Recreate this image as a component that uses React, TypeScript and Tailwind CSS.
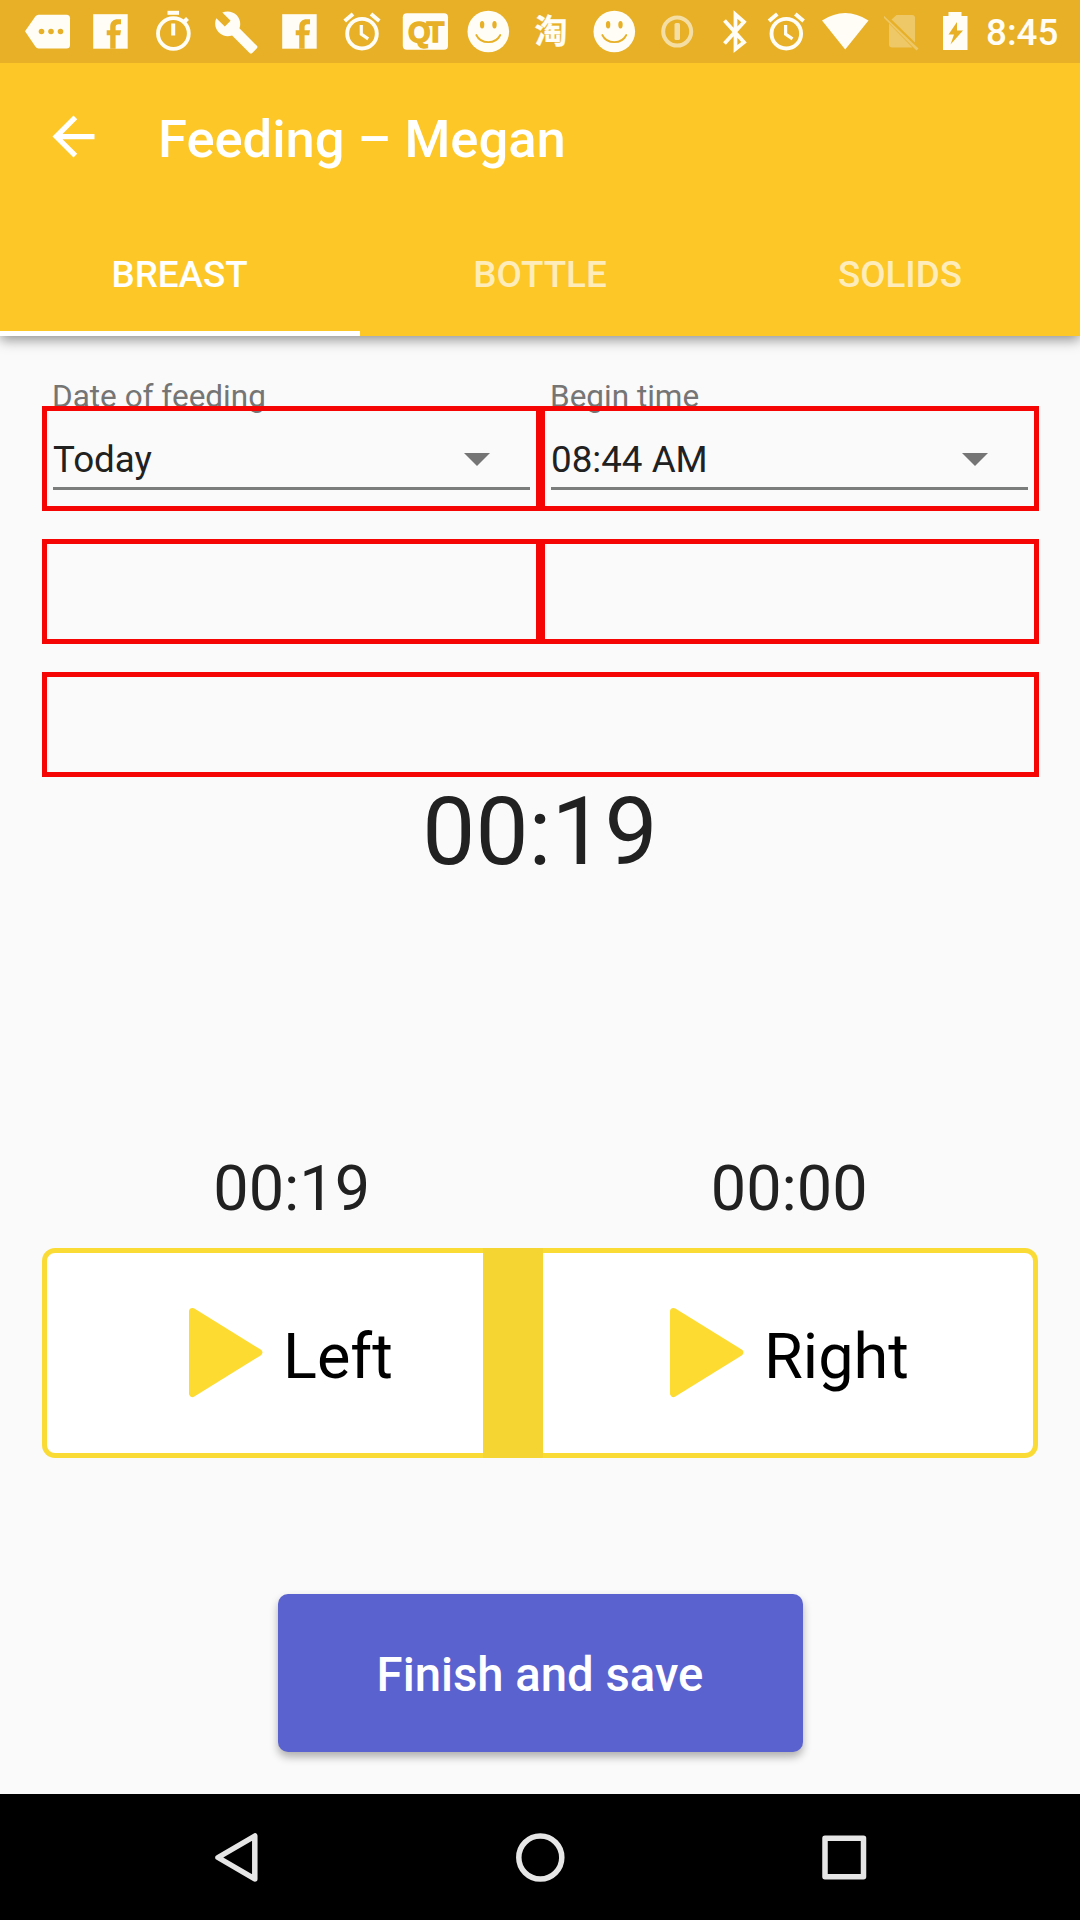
import React from "react";

function Cell({ x, w = 63, children }: { x: number; w?: number; children: React.ReactNode }) {
  return (
    <svg width={w} height={63} viewBox={`${x} 0 ${w} 63`} fill="#fffdf6" className="block shrink-0">
      {children}
    </svg>
  );
}

const BAR = "#e7b027";

function Facebook({ x }: { x: number }) {
  return (
    <Cell x={x}>
      <g transform={`translate(${x} 0)`}>
        <rect x="14.200" y="14.200" width="34.500" height="34.500" />
        <path fill={BAR} d="M31.200 48.700V35.200H27.700V30.200H31.200V27c0-5.300 3.200-7.800 7.600-7.800h3.200v5h-2.400c-2.200 0-3 1-3 3v3h5.400l-.8 5h-4.600v13.500z" />
      </g>
    </Cell>
  );
}

function Alarm({ x, w, cx }: { x: number; w?: number; cx: number }) {
  return (
    <Cell x={x} w={w}>
      <g transform={`translate(${cx} 0)`} fill="none" stroke="#fffdf6">
        <circle cy="33.700" r="14.800" strokeWidth="3.900" />
        <path d="M-.7 25v9.200l6.900 4.600" strokeWidth="3.200" />
        <path d="M-17.300 21l8.300-7M17.300 21L9 14" strokeWidth="4" />
      </g>
    </Cell>
  );
}

function Smile({ x }: { x: number }) {
  return (
    <Cell x={x}>
      <g transform={`translate(${x + 31.300} 31.500)`}>
        <circle r="20.800" />
        <ellipse cx="-6.200" cy="-6.700" rx="2.200" ry="3.700" fill={BAR} />
        <ellipse cx="6.200" cy="-6.700" rx="2.200" ry="3.700" fill={BAR} />
        <path d="M-12 3.500C-7.500 13 7.500 13 12 3.500" fill="none" stroke={BAR} strokeWidth="1.800" strokeLinecap="round" />
      </g>
    </Cell>
  );
}

function StatusBar() {
  return (
    <div className="flex h-[63px] items-center bg-[#e7b027] pl-4">
      <Cell x={16}>
        <path d="M25 31.300L35.500 16.200Q36.700 14.700 38.500 14.700H66.500Q70 14.700 70 18.200V45Q70 48.500 66.500 48.500H38.500Q36.700 48.500 35.500 46.800Z" />
        <g fill={BAR}>
          <circle cx="41.500" cy="31.500" r="2.800" />
          <circle cx="51" cy="31.500" r="2.800" />
          <circle cx="60.500" cy="31.500" r="2.800" />
        </g>
      </Cell>
      <Facebook x={79} />
      <Cell x={142}>
        <rect x="167.500" y="10.800" width="11.500" height="4" />
        <rect x="171.200" y="23.500" width="4" height="12" />
        <circle cx="173.400" cy="33.500" r="15.400" fill="none" stroke="#fffdf6" strokeWidth="3.800" />
        <path d="M183.500 22.500l4-4" stroke="#fffdf6" strokeWidth="4" />
      </Cell>
      <Cell x={205}>
        <path transform="translate(213.300 9.300) scale(1.920)" d="M22.700 19l-9.100-9.100c.9-2.300.4-5-1.500-6.900-2-2-5-2.400-7.400-1.300L9 6 6 9 1.600 4.700C.4 7.100.9 10.100 2.900 12.100c1.900 1.900 4.600 2.400 6.900 1.500l9.100 9.100c.4.400 1 .4 1.400 0l2.300-2.300c.5-.4.500-1.100.1-1.400z" />
      </Cell>
      <Facebook x={268} />
      <Alarm x={331} cx={362} />
      <Cell x={394}>
        <rect x="402.800" y="13.200" width="45.200" height="36.500" rx="4" />
        <text x="408" y="41.500" fill={BAR} stroke={BAR} strokeWidth="1.400" fontFamily="Liberation Sans, sans-serif" fontWeight="700" fontSize="29" letterSpacing="-4">QT</text>
      </Cell>
      <Smile x={457} />
      <Cell x={520}>
        <text x="534.500" y="43" fontSize="33" fontWeight="700" stroke="#fffdf6" strokeWidth="0.300" fontFamily="Noto Sans CJK SC, sans-serif">淘</text>
      </Cell>
      <Smile x={583} />
      <Cell x={646}>
        <g opacity="0.600">
          <circle cx="677.200" cy="31.600" r="14" fill="none" stroke="#fffdf6" strokeWidth="4" />
          <rect x="674.500" y="23" width="5.500" height="17" rx="1.500" />
        </g>
      </Cell>
      <Cell x={709} w={51}>
        <path d="M724.500 20.500L744 42.200L735.500 49V14.500L744 22L724.500 43.500" fill="none" stroke="#fffdf6" strokeWidth="3.800" />
      </Cell>
      <Alarm x={760} w={52} cx={786.300} />
      <Cell x={812} w={66}>
        <path d="M845.200 49.500L822 20.500Q845.200 5.500 868.500 20.500Z" />
      </Cell>
      <Cell x={878} w={46}>
        <g opacity="0.300">
          <path d="M896.500 15H912Q915 15 915 18V42.500L891.500 19.500Z" />
          <path d="M889 23.500V44.500Q889 47.500 892 47.500H912.500Z" />
          <path d="M884 15.700L886 17.700L918.500 48.500L916.500 50.500L884 18Z" />
        </g>
      </Cell>
      <Cell x={924} w={62}>
        <path fillRule="evenodd" d="M943 16H948.500V12H961.500V16H967.500V50H943ZM957 22L948.500 34.500H954L950.500 44.500L963 30.500H957Z" />
      </Cell>
      <span className="mt-[3px] text-[36.750px] leading-[42px] font-medium text-[#fffdf6]">8:45</span>
    </div>
  );
}

function Tab({ label, active = false }: { label: string; active?: boolean }) {
  return (
    <button
      className={
        active
          ? "h-[126px] w-[360px] border-b-[5px] border-white pt-[9px] pr-[1px] text-[36.750px] font-medium text-white"
          : "h-[126px] w-[360px] border-b-[5px] border-transparent pt-[9px] text-[36.750px] font-medium text-white/70"
      }
    >
      {label}
    </button>
  );
}

function Picker({ label, value }: { label: string; value: string }) {
  return (
    <div className="w-[498px]">
      <div className="pt-[1px] pl-[10px] text-[31.500px] leading-[38px] text-[#757575]">{label}</div>
      <div className="relative z-10 -mt-[10px] h-[105px] w-[499px] border-[5px] border-[#f60505] pt-[28px] pl-[6px]">
        <div className="flex h-[51px] w-[477px] items-start justify-between border-b-[3px] border-[#7b7d7c] pr-[40px]">
          <span className="text-[36.750px] leading-[42px] text-[#212121]">{value}</span>
          <svg width="26" height="13" viewBox="0 0 26 13" className="mt-[14px] block">
            <path d="M0 0H26L13 13Z" fill="#757575" />
          </svg>
        </div>
      </div>
    </div>
  );
}

function Play() {
  return (
    <svg width="74" height="90" viewBox="0 0 74 90" className="block">
      <path d="M3.500 3.500L69.800 44.500L3.500 85.500Z" fill="#fddb31" stroke="#fddb31" strokeWidth="7" strokeLinejoin="round" />
    </svg>
  );
}

export default function App() {
  return (
    <div className="flex h-[1920px] w-[1080px] flex-col overflow-hidden bg-[#fafafa] font-['Roboto',sans-serif]">
      <header className="shrink-0 bg-[#fdc727] shadow-[0_4px_12px_rgba(0,0,0,0.420)]">
        <StatusBar />
        <div className="flex h-[147px] items-center pl-[42px]">
          <svg width="63" height="63" viewBox="0 0 24 24" fill="#fff" className="block">
            <path d="M20 11H7.830l5.590-5.590L12 4l-8 8 8 8 1.410-1.410L7.830 13H20v-2z" />
          </svg>
          <h1 className="mt-[6px] ml-[53px] text-[52.500px] font-medium text-white">Feeding – Megan</h1>
        </div>
        <nav className="flex">
          <Tab label="BREAST" active />
          <Tab label="BOTTLE" />
          <Tab label="SOLIDS" />
        </nav>
      </header>

      <main className="flex grow flex-col px-[42px] pt-[41px]">
        <section className="flex">
          <Picker label="Date of feeding" value="Today" />
          <Picker label="Begin time" value="08:44 AM" />
        </section>
        <div className="mt-[28px] flex">
          <div className="h-[105px] w-[499px] shrink-0 border-[5px] border-[#f60505]" />
          <div className="-ml-px h-[105px] w-[499px] shrink-0 border-[5px] border-[#f60505]" />
        </div>
        <div className="mt-[28px] h-[105px] w-[997px] border-[5px] border-[#f60505]" />

        <div className="mt-[5px] h-[100px] text-center text-[94.500px] leading-[100px] text-[#212121]">00:19</div>

        <div className="mt-[271px] flex pl-[1px] text-center text-[63px] leading-[72px] text-[#212121]">
          <div className="w-1/2">00:19</div>
          <div className="w-1/2">00:00</div>
        </div>

        <div className="mt-[23px] flex h-[210px] rounded-[13px] border-[5px] border-[#fadb36] bg-white text-[63px] leading-[72px] text-black">
          <button className="flex w-[436px] items-center pl-[142px]">
            <Play />
            <span className="mt-[7px] ml-[20px]">Left</span>
          </button>
          <div className="-my-[5px] w-[60px] bg-[#f5d531]" />
          <button className="flex grow items-center pl-[127px]">
            <Play />
            <span className="mt-[7px] ml-[20px]">Right</span>
          </button>
        </div>

        <button className="mt-[136px] h-[158px] w-[525px] self-center rounded-[10px] bg-[#5a62d0] pt-[5px] text-[47.250px] font-medium text-white shadow-[0_5px_8px_rgba(0,0,0,0.300)]">
          Finish and save
        </button>
      </main>

      <footer className="h-[126px] shrink-0 bg-black">
        <svg width="1080" height="126" viewBox="0 1794 1080 126" fill="none" stroke="#e6e6e6" strokeWidth="5.500" strokeLinejoin="round" className="block">
          <path d="M254.800 1836V1879L218 1857.500Z" />
          <circle cx="540.300" cy="1857.500" r="21.500" />
          <rect x="825" y="1838.200" width="38.500" height="38.500" />
        </svg>
      </footer>
    </div>
  );
}
